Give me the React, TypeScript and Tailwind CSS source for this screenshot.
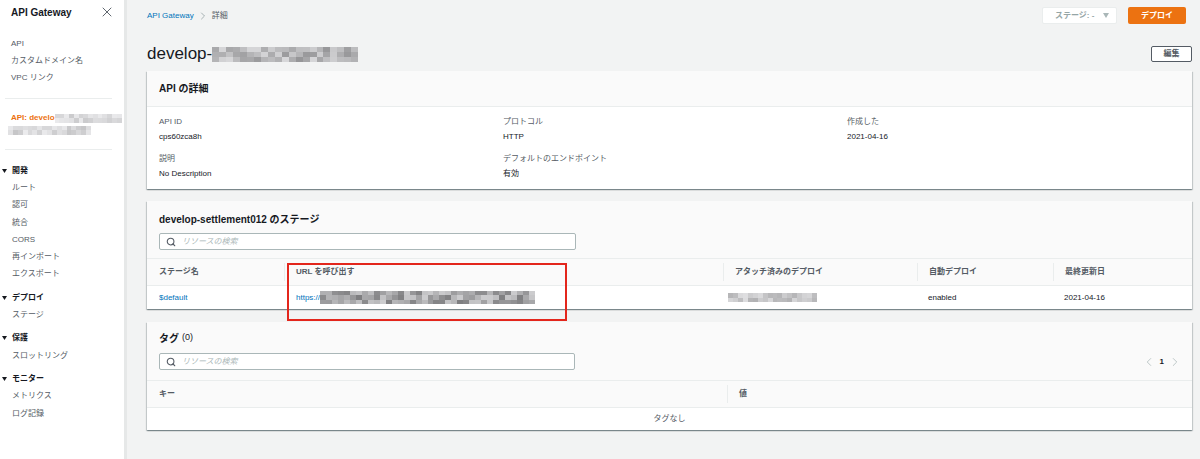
import { Search, X, ChevronRight, ChevronLeft } from 'lucide-react';

const FONT = "font-['Liberation_Sans','Noto_Sans_CJK_JP',sans-serif]";

// pixelated blur blocks (the reference hides names behind a mosaic)
function Mosaic({
  w,
  h,
  cell = 7,
  seed = 1,
  lo = 140,
  hi = 210,
}: {
  w: number;
  h: number;
  cell?: number;
  seed?: number;
  lo?: number;
  hi?: number;
}) {
  const cols = Math.ceil(w / cell);
  const rows = Math.ceil(h / cell);
  let s = seed * 7919;
  const rnd = () => {
    s = (s * 9301 + 49297) % 233280;
    return s / 233280;
  };
  const cells: string[] = [];
  for (let i = 0; i < rows * cols; i++) {
    const v = Math.round(lo + (hi - lo) * rnd());
    cells.push(`rgb(${v},${v},${v + 2})`);
  }
  return (
    <div
      className="grid shrink-0"
      style={{
        width: w,
        height: h,
        gridTemplateColumns: `repeat(${cols}, 1fr)`,
        gridTemplateRows: `repeat(${rows}, 1fr)`,
      }}
    >
      {cells.map((c, i) => (
        <div key={i} style={{ background: c }} />
      ))}
    </div>
  );
}

const NAV_SECTIONS = [
  { title: '開発', items: ['ルート', '認可', '統合', 'CORS', '再インポート', 'エクスポート'] },
  { title: 'デプロイ', items: ['ステージ'] },
  { title: '保護', items: ['スロットリング'] },
  { title: 'モニター', items: ['メトリクス', 'ログ記録'] },
];

function Sidebar() {
  return (
    <aside className="w-[127px] shrink-0 bg-white border-r-[3px] border-[#e6e8e8] min-h-[459px]">
      {/* Header */}
      <div className="h-[24px] flex items-center justify-between pl-[11px] pr-[9px]">
        <span className="text-[10px] font-bold text-[#16191f]">API Gateway</span>
        <X size={16} strokeWidth={1.4} className="text-[#545b64]" />
      </div>

      <div className="mt-[11px] text-[8px] text-[#545b64]">
        {['API', 'カスタムドメイン名', 'VPC リンク'].map((t) => (
          <div key={t} className="h-[17px] flex items-center pl-[11px]">
            {t}
          </div>
        ))}
      </div>

      <div className="mt-[12px] ml-[5px] w-[107px] h-px bg-[#eaeded]" />

      {/* Active API */}
      <div className="mt-[13px] h-[24px] text-[8px] font-bold text-[#ec7211]">
        <div className="h-[12px] flex items-center pl-[11px]">
          <span>API: develo</span>
          <Mosaic w={67} h={9} cell={5} seed={3} lo={200} hi={236} />
        </div>
        <div className="h-[12px] flex items-center pl-[8px]">
          <Mosaic w={83} h={9} cell={5} seed={5} lo={198} hi={236} />
        </div>
      </div>

      <div className="mt-[13px] ml-[5px] w-[107px] h-px bg-[#eaeded]" />

      {/* Sections */}
      <div className="mt-[12px] text-[8px]">
        {NAV_SECTIONS.map((sec, i) => (
          <div key={sec.title} className={i > 0 ? 'mt-[6px]' : ''}>
            <div className="h-[17.3px] flex items-center font-bold text-[#16191f]">
              <svg width="5" height="4" viewBox="0 0 5 4" className="ml-[2px] mr-[5px]">
                <polygon points="0,0 5,0 2.5,4" fill="#16191f" />
              </svg>
              {sec.title}
            </div>
            {sec.items.map((it) => (
              <div key={it} className="h-[17.3px] flex items-center pl-[12px] text-[#545b64]">
                {it}
              </div>
            ))}
          </div>
        ))}
      </div>
    </aside>
  );
}

const CARD =
  'bg-white shadow-[0_1px_1px_0_rgba(0,28,36,0.3),1px_1px_1px_0_rgba(0,28,36,0.15),-1px_1px_1px_0_rgba(0,28,36,0.15)]';

function SearchBox({ w }: { w: string }) {
  return (
    <div
      className={`${w} h-[17px] bg-white border border-[#aab7b8] rounded-[2px] flex items-center pl-[6px]`}
    >
      <Search size={10} strokeWidth={2.6} className="text-[#545b64]" />
      <span className="ml-[6px] text-[8px] italic text-[#aab7b8]">リソースの検索</span>
    </div>
  );
}

function Th({ children, first }: { children: React.ReactNode; first?: boolean }) {
  return (
    <div className="flex items-center h-full">
      {!first && <div className="w-px h-[18px] bg-[#eaeded]" />}
      <span className={first ? 'pl-[12px]' : 'pl-[11px]'}>{children}</span>
    </div>
  );
}

function Field({ label, value }: { label: string; value: string }) {
  return (
    <div>
      <div className="h-[15px] flex items-center text-[#545b64]">{label}</div>
      <div className="h-[15px] flex items-center text-[#16191f]">{value}</div>
    </div>
  );
}

export default function App() {
  return (
    <div className={`${FONT} flex min-h-[459px] w-[1200px] text-[8px] text-[#16191f]`}>
      <Sidebar />

      <main className="flex-1 bg-[#f2f3f3] pl-[20px] pr-[8px] min-h-[459px]">
        {/* Breadcrumb + actions */}
        <div className="h-[31px] flex items-center justify-between pr-[6px]">
          <div className="flex items-center text-[8px]">
            <span className="text-[#0073bb]">API Gateway</span>
            <ChevronRight size={12} strokeWidth={1.4} className="mx-[3px] text-[#879596]" />
            <span className="text-[#545b64]">詳細</span>
          </div>
          <div className="flex items-center gap-[11px]">
            <div className="w-[75px] h-[17px] bg-white border border-[#eaeded] rounded-[2px] flex items-center justify-between pl-[12px] pr-[7px] text-[#95a5a6] font-bold">
              <span>ステージ: -</span>
              <svg width="6" height="5" viewBox="0 0 6 5">
                <polygon points="0,0 6,0 3,5" fill="#aab7b8" />
              </svg>
            </div>
            <div className="w-[58px] h-[17px] bg-[#ec7211] rounded-[2px] flex items-center justify-center text-white font-bold">
              デプロイ
            </div>
          </div>
        </div>

        {/* Title */}
        <div className="h-[40px] pt-[6px] flex items-center justify-between">
          <div className="flex items-center">
            <span className="text-[17px] text-[#16191f]">develop-</span>
            <Mosaic w={146} h={15} cell={7} seed={11} lo={150} hi={215} />
          </div>
          <div className="w-[41px] h-[16px] bg-white border border-[#545b64] rounded-[2px] flex items-center justify-center font-bold text-[#545b64]">
            編集
          </div>
        </div>

        {/* API details */}
        <section className={CARD}>
          <div className="h-[36px] bg-[#fafafa] border-b border-[#eaeded] flex items-center pl-[12px]">
            <h2 className="text-[10px] font-bold">API の詳細</h2>
          </div>
          <div className="pl-[12px] pt-[7px] pb-[8px] grid grid-cols-[344px_344px_1fr] gap-y-[7px]">
            <Field label="API ID" value="cps60zca8h" />
            <Field label="プロトコル" value="HTTP" />
            <Field label="作成した" value="2021-04-16" />
            <Field label="説明" value="No Description" />
            <Field label="デフォルトのエンドポイント" value="有効" />
          </div>
        </section>

        {/* Stages */}
        <section className={`${CARD} relative mt-[12px]`}>
          <div className="bg-[#fafafa] pl-[12px] pt-[8px] pb-[8px]">
            <h2 className="h-[20px] flex items-center text-[10px] font-bold">
              develop-settlement012 のステージ
            </h2>
            <div className="mt-[4px]">
              <SearchBox w="w-[417px]" />
            </div>
          </div>
          <div className="grid grid-cols-[137px_439px_194px_136px_1fr] h-[28px] bg-[#fafafa] border-y border-[#eaeded] font-bold text-[#545b64]">
            <Th first>ステージ名</Th>
            <Th>URL を呼び出す</Th>
            <Th>アタッチ済みのデプロイ</Th>
            <Th>自動デプロイ</Th>
            <Th>最終更新日</Th>
          </div>
          <div className="grid grid-cols-[137px_439px_194px_136px_1fr] h-[23px] items-center">
            <span className="pl-[12px] text-[#0073bb]">$default</span>
            <div className="pl-[12px] flex items-center">
              <span className="text-[#0073bb]">https://</span>
              <Mosaic w={215} h={14} cell={6} seed={21} lo={125} hi={205} />
            </div>
            <div className="pl-[5px]">
              <Mosaic w={89} h={9} cell={5} seed={8} lo={178} hi={222} />
            </div>
            <span className="pl-[11px]">enabled</span>
            <span className="pl-[11px]">2021-04-16</span>
          </div>

          {/* highlight box */}
          <div className="absolute left-[140px] top-[62px] w-[280px] h-[58px] border-2 border-[#e3261c] pointer-events-none" />
        </section>

        {/* Tags */}
        <section className={`${CARD} mt-[13px]`}>
          <div className="bg-[#fafafa] pl-[12px] pr-[10px] pt-[6px] pb-[10px]">
            <h2 className="h-[20px] flex items-center text-[10px]">
              <span className="font-bold">タグ</span>
              <span className="ml-[3px] text-[9px]">(0)</span>
            </h2>
            <div className="mt-[5px] flex items-center justify-between">
              <SearchBox w="w-[416px]" />
              <div className="flex items-center gap-[4px]">
                <ChevronLeft size={14} strokeWidth={1.3} className="text-[#aab7b8]" />
                <span className="font-bold text-[#16191f]">1</span>
                <ChevronRight size={14} strokeWidth={1.3} className="text-[#aab7b8]" />
              </div>
            </div>
          </div>
          <div className="grid grid-cols-[580px_1fr] h-[28px] bg-[#fafafa] border-y border-[#eaeded] font-bold text-[#545b64]">
            <Th first>キー</Th>
            <Th>値</Th>
          </div>
          <div className="h-[22px] flex items-center justify-center text-[#545b64]">タグなし</div>
        </section>
      </main>
    </div>
  );
}
